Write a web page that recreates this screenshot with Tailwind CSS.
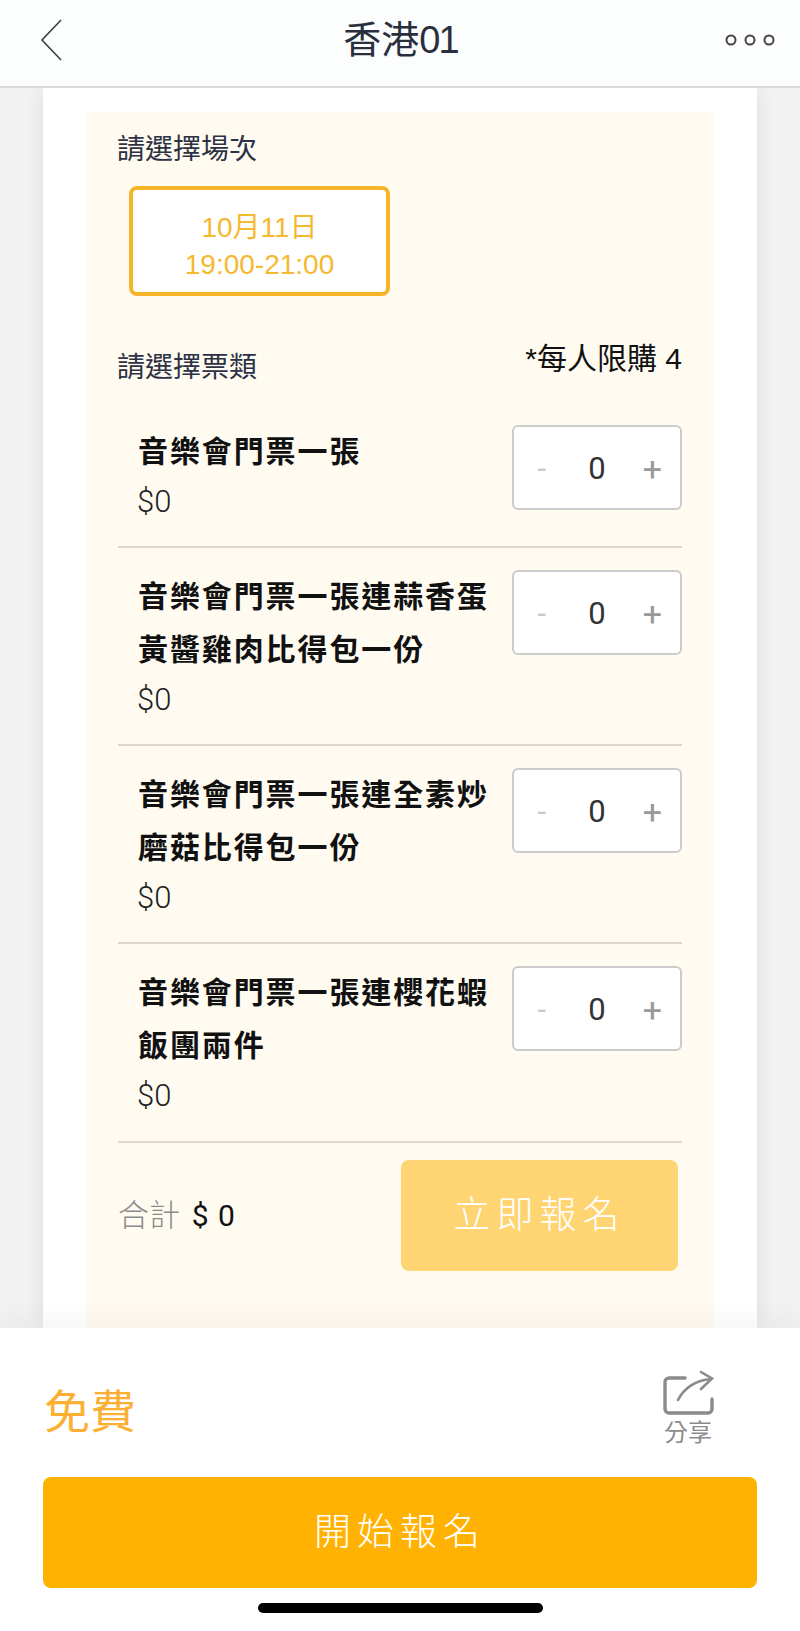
<!DOCTYPE html>
<html lang="zh-Hant">
<head>
    <meta charset="UTF-8">
    <meta name="viewport" content="width=device-width, initial-scale=1.0">
    <title>香港01</title>
    <script src="https://cdn.jsdelivr.net/npm/@tailwindcss/browser@4"></script>
</head>
<body class="bg-[#f2f2f2]">
    <div class="w-[800px] h-[1631px] flex flex-col overflow-hidden font-['Liberation_Sans','Noto_Sans_CJK_TC',sans-serif]">

        <!-- top bar -->
        <header class="relative z-10 h-[88px] shrink-0 flex items-center justify-between pb-[6px] pl-[40px] pr-[25px] bg-[#fcfdfd] border-b-2 border-[#d9d9d9]">
            <svg class="w-[24px] h-[44px]" viewBox="0 0 24 44" fill="none" stroke="#3a3d45" stroke-width="1.6"><path d="M21 2 L2 22 L21 42"/></svg>
            <h1 class="text-[38px] leading-[50px] text-[#2a2f3d] ml-[12px]">香港<span class="tracking-[-2px]">01</span></h1>
            <svg class="w-[50px] h-[14px]" viewBox="0 0 50 14" fill="none" stroke="#444" stroke-width="2"><circle cx="6" cy="7" r="4.5"/><circle cx="25" cy="7" r="4.5"/><circle cx="44" cy="7" r="4.5"/></svg>
        </header>

        <!-- scrolled content -->
        <main class="flex-1 min-h-0 overflow-hidden px-[43px]">
            <div class="h-full bg-white pt-[24px] pl-[44px] pr-[43px] shadow-[0_0_18px_rgba(0,0,0,0.09)]">
                <div class="h-full bg-[#fffbf1] pt-[20px] pl-[31px] pr-[32px]">
                    <p class="text-[28px] leading-[36px] -ml-[1px] text-[#2c3244]">請選擇場次</p>
                    <div class="mt-[18px] ml-[11px] w-[261px] h-[110px] pt-[10px] flex flex-col items-center justify-center bg-white border-4 border-[#f6b428] rounded-[8px] text-[#f5b82e] text-[28px] leading-[37px]">
                        <span>10月11日</span>
                        <span>19:00-21:00</span>
                    </div>

                    <div class="mt-[45px] mb-[19px] h-[43px] flex justify-between items-start">
                        <p class="mt-[9px] -ml-[1px] text-[28px] leading-[36px] text-[#2c3244]">請選擇票類</p>
                        <p class="text-[30px] leading-[36px] text-[#111]">*每人限購 4</p>
                    </div>

                    <div class="flex justify-between items-start pt-[20px] pb-[22px] border-b-2 border-[#dcd8ce]">
                        <div class="pl-[20px] w-[380px] pt-[2px]">
                            <p class="text-[30px] leading-[53px] tracking-[1.9px] font-bold text-[#111]">音樂會門票一張</p>
                            <p class="mt-[2px] -ml-[1px] font-['Roboto'] font-light text-[31px] leading-[44px] text-[#222]">$0</p>
                        </div>
                        <div class="mt-[2px] w-[170px] h-[85px] pt-[4px] grid grid-cols-3 items-center text-center bg-white border-2 border-[#cbcbcb] rounded-[6px] font-['Roboto'] text-[31px]">
                            <span class="text-[#c8c8c8]">-</span><span class="text-[#333]">0</span><span class="text-[34px] text-[#999]">+</span>
                        </div>
                    </div>

                    <div class="flex justify-between items-start pt-[20px] pb-[22px] border-b-2 border-[#dcd8ce]">
                        <div class="pl-[20px] w-[380px] pt-[2px]">
                            <p class="text-[30px] leading-[53px] tracking-[1.9px] font-bold text-[#111]">音樂會門票一張連蒜香蛋<br>黃醬雞肉比得包一份</p>
                            <p class="mt-[2px] -ml-[1px] font-['Roboto'] font-light text-[31px] leading-[44px] text-[#222]">$0</p>
                        </div>
                        <div class="mt-[2px] w-[170px] h-[85px] pt-[4px] grid grid-cols-3 items-center text-center bg-white border-2 border-[#cbcbcb] rounded-[6px] font-['Roboto'] text-[31px]">
                            <span class="text-[#c8c8c8]">-</span><span class="text-[#333]">0</span><span class="text-[34px] text-[#999]">+</span>
                        </div>
                    </div>

                    <div class="flex justify-between items-start pt-[20px] pb-[22px] border-b-2 border-[#dcd8ce]">
                        <div class="pl-[20px] w-[380px] pt-[2px]">
                            <p class="text-[30px] leading-[53px] tracking-[1.9px] font-bold text-[#111]">音樂會門票一張連全素炒<br>磨菇比得包一份</p>
                            <p class="mt-[2px] -ml-[1px] font-['Roboto'] font-light text-[31px] leading-[44px] text-[#222]">$0</p>
                        </div>
                        <div class="mt-[2px] w-[170px] h-[85px] pt-[4px] grid grid-cols-3 items-center text-center bg-white border-2 border-[#cbcbcb] rounded-[6px] font-['Roboto'] text-[31px]">
                            <span class="text-[#c8c8c8]">-</span><span class="text-[#333]">0</span><span class="text-[34px] text-[#999]">+</span>
                        </div>
                    </div>

                    <div class="flex justify-between items-start pt-[20px] pb-[23px] border-b-2 border-[#dcd8ce]">
                        <div class="pl-[20px] w-[380px] pt-[2px]">
                            <p class="text-[30px] leading-[53px] tracking-[1.9px] font-bold text-[#111]">音樂會門票一張連櫻花蝦<br>飯團兩件</p>
                            <p class="mt-[2px] -ml-[1px] font-['Roboto'] font-light text-[31px] leading-[44px] text-[#222]">$0</p>
                        </div>
                        <div class="mt-[2px] w-[170px] h-[85px] pt-[4px] grid grid-cols-3 items-center text-center bg-white border-2 border-[#cbcbcb] rounded-[6px] font-['Roboto'] text-[31px]">
                            <span class="text-[#c8c8c8]">-</span><span class="text-[#333]">0</span><span class="text-[34px] text-[#999]">+</span>
                        </div>
                    </div>

                    <div class="mt-[17px] pr-[4px] flex justify-between items-center">
                        <p class="text-[31px] leading-[44px] font-light text-[#8a8a8a]">合計 <span class="ml-[3px] text-[#111] text-[30px] font-['Roboto'] font-normal tracking-[1px]">$ 0</span></p>
                        <button class="w-[277px] h-[111px] bg-[#ffd473] rounded-[8px] text-white text-[37px] tracking-[6px] font-light">立即報名</button>
                    </div>
                </div>
            </div>
        </main>

        <!-- bottom sheet -->
        <footer class="relative z-10 h-[303px] shrink-0 bg-white px-[43px] pt-[45px] shadow-[0_-12px_22px_rgba(0,0,0,0.035)]">
            <div class="h-[74px] flex justify-between items-start">
                <p class="mt-[9px] ml-[1px] text-[46px] leading-[60px] text-[#fbb034]">免費</p>
                <div class="mr-[41px] flex flex-col items-center">
                    <svg class="w-[56px] h-[46px] -mt-[3px]" viewBox="0 0 56 46" fill="none" stroke="#8b8b8b" stroke-width="3.4" stroke-linecap="round">
                        <path d="M25 8 H9 a4 4 0 0 0 -4 4 V39 a4 4 0 0 0 4 4 H48 a4 4 0 0 0 4 -4 V29"/>
                        <path d="M18 30 C24 18 36 10 51 9 M41 2 L52 8.5 L41 19" stroke-width="2.6"/>
                    </svg>
                    <span class="text-[24px] leading-[30px] text-[#8c8c8c] mt-[2px]">分享</span>
                </div>
            </div>
            <button class="mt-[30px] w-full h-[111px] bg-[#ffb202] rounded-[8px] text-white text-[37px] tracking-[6px] font-light">開始報名</button>
            <div class="mt-[15px] mx-auto w-[285px] h-[10px] rounded-full bg-black"></div>
        </footer>
    </div>
</body>
</html>
